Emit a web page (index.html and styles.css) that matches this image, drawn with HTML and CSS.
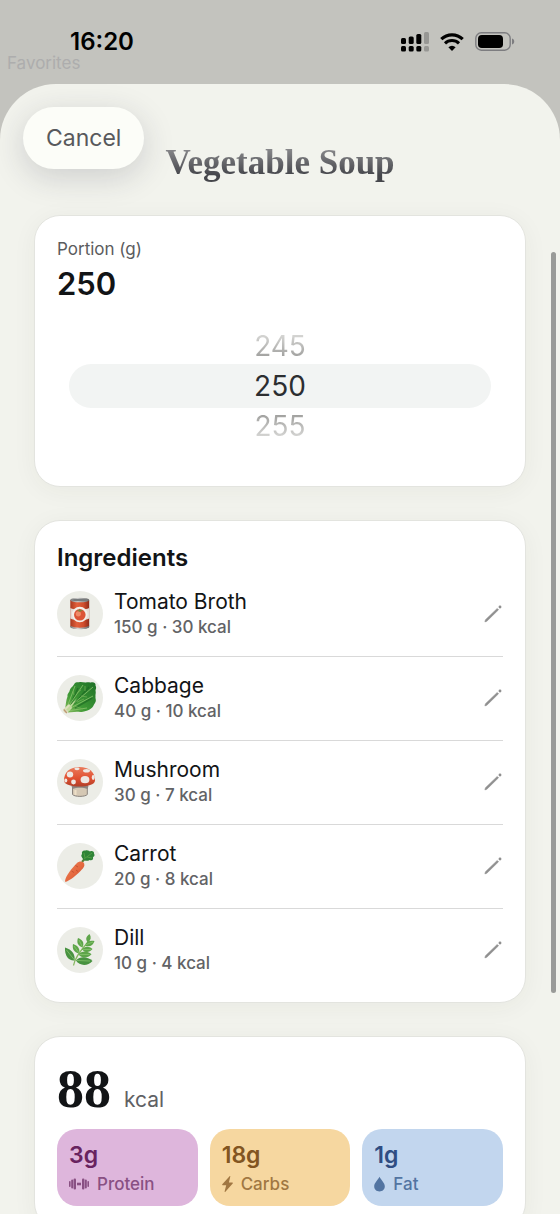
FILE: index.html
```
<!DOCTYPE html>
<html lang="en">
<head>
<meta charset="utf-8">
<meta name="viewport" content="width=device-width, initial-scale=1">
<title>Vegetable Soup</title>
<link rel="stylesheet" href="styles.css">
</head>
<body>
<svg class="defs" aria-hidden="true">
  <defs>
    <linearGradient id="can" x1="0" x2="1"><stop offset="0" stop-color="#a9381f"/><stop offset=".35" stop-color="#e2603c"/><stop offset=".7" stop-color="#d04c2c"/><stop offset="1" stop-color="#8f2c1a"/></linearGradient>
    <linearGradient id="metal" x1="0" x2="1"><stop offset="0" stop-color="#777"/><stop offset=".4" stop-color="#d8d8d8"/><stop offset="1" stop-color="#666"/></linearGradient>
    <linearGradient id="leaf" x1="0" y1="1" x2="1" y2="0"><stop offset="0" stop-color="#8cbc62"/><stop offset=".35" stop-color="#3f9a36"/><stop offset="1" stop-color="#1d6f26"/></linearGradient>
    <linearGradient id="cap" x1="0" y1="0" x2="0" y2="1"><stop offset="0" stop-color="#ea7b5c"/><stop offset=".6" stop-color="#e04f30"/><stop offset="1" stop-color="#b04029"/></linearGradient>
    <linearGradient id="root" x1="0" y1="0" x2="1" y2="1"><stop offset="0" stop-color="#ee8258"/><stop offset=".55" stop-color="#e4683f"/><stop offset="1" stop-color="#b9452e"/></linearGradient>
    <symbol id="pencil" viewBox="0 0 18 18"><path d="M2.200 14.200 12.800 4l1.200 1.200L3.500 15.500l-1.800.6z" fill="currentColor" stroke="currentColor" stroke-width=".5" stroke-linejoin="round"/><circle cx="15.300" cy="2.700" r="1.300" fill="currentColor"/></symbol>
  </defs>
</svg>
<div class="screen">
  <header class="status">
    <span class="back-label">Favorites</span>
    <time class="clock">16:20</time>
    <div class="indicators">
      <svg width="28" height="20" viewBox="0 0 28 20" aria-hidden="true">
        <rect x="0" y="6" width="5" height="6" rx="1.500"/><rect x="7.700" y="4.500" width="5" height="7.500" rx="1.500"/><rect x="15.300" y="2" width="5" height="10" rx="1.500"/>
        <rect x="0" y="14" width="5" height="5.500" rx="1.500"/><rect x="7.700" y="14" width="5" height="5.500" rx="1.500"/><rect x="15.300" y="14" width="5" height="5.500" rx="1.500"/>
        <g fill="#979794"><rect x="23" y="0" width="5" height="12" rx="1.500"/><rect x="23" y="14" width="5" height="5.500" rx="1.500"/></g>
      </svg>
      <svg width="24" height="18" viewBox="0 0 24 18" fill="none" stroke="#000" stroke-width="3.200" aria-hidden="true">
        <path d="M1.300 6.200a15.500 15.500 0 0 1 21.400 0"/><path d="M5 10.400a10 10 0 0 1 14 0" stroke-width="3"/><path d="M12 18 8.400 14.200a5 5 0 0 1 7.200 0z" fill="#000" stroke="none"/>
      </svg>
      <svg width="40" height="20" viewBox="0 0 40 20" aria-hidden="true">
        <rect x=".8" y=".8" width="34.400" height="17.400" rx="5.500" fill="none" stroke="#7d7d80" stroke-width="1.400"/><rect x="3" y="3" width="25" height="13" rx="3.800"/><path d="M37 6.500c1.700.6 2.200 1.800 2.200 3s-.5 2.400-2.200 3z" fill="#7d7d80"/>
      </svg>
    </div>
  </header>

  <main class="sheet">
    <div class="topbar">
      <button class="cancel" type="button">Cancel</button>
      <h1 class="title">Vegetable Soup</h1>
    </div>

    <div class="cards">
      <section class="card portion">
        <p class="portion-label" id="portion-label">Portion (g)</p>
        <p class="portion-value">250</p>
        <div class="picker" role="radiogroup" aria-labelledby="portion-label">
          <label class="choice above"><input type="radio" name="portion" value="245"><span>245</span></label>
          <label class="choice current"><input type="radio" name="portion" value="250" checked><span>250</span></label>
          <label class="choice below"><input type="radio" name="portion" value="255"><span>255</span></label>
        </div>
      </section>

      <section class="card">
        <h2 class="heading">Ingredients</h2>
        <ul class="list">
          <li class="item">
            <span class="avatar"><svg viewBox="0 0 46 46" aria-hidden="true">
              <path d="M13.300 9v26c0 4 18.900 4 18.900 0V9z" fill="url(#can)"/>
              <path d="M13.300 17c4 2 15 2 18.900 0v10.500c-4 2-15 2-18.900 0z" fill="#e4dcd5"/>
              <circle cx="22.800" cy="23.500" r="7.800" fill="#f3eee9"/><circle cx="22.800" cy="23.800" r="5.800" fill="#dc5336"/><circle cx="21.300" cy="22.800" r="2.600" fill="#ef8a68"/>
              <path d="m22.800 20.800-3.200-1.300 2.600-.2.500-1.700.8 1.700 2.800.1z" fill="#6f8a3c"/>
              <path d="M13.300 34.800c4 2.500 15 2.500 18.900 0v1.100c0 3-18.900 3-18.900 0z" fill="url(#metal)"/>
              <ellipse cx="22.750" cy="9" rx="9.500" ry="2.300" fill="url(#metal)"/><ellipse cx="22.750" cy="9" rx="7.800" ry="1.300" fill="#777b7d"/>
            </svg></span>
            <div class="info"><span class="name">Tomato Broth</span><span class="detail">150 g · 30 kcal</span></div>
            <button class="edit" type="button" aria-label="Edit Tomato Broth"><svg viewBox="0 0 18 18"><use href="#pencil"/></svg></button>
          </li>
          <li class="item">
            <span class="avatar"><svg viewBox="0 0 46 46" aria-hidden="true">
              <path d="M8 34C9 29 9 25 10.500 21.500 10 18.500 12 18 12.500 16c.5-3 3-4 4.500-6.500 1-2.500 3-2.300 5-2.300 2.500-.7 4.500.5 7 .3 2-.8 4 .3 5.500-.3 3-.3 4.500 1.300 4 3.300 1.300 2 .3 3.500 0 5 .7 2.500-.3 4 0 6-.3 2.500 1.300 4-.5 6.500-1.500 2-2 4.500-4 5.500-2.500 2-4.500 2.500-7 3-2.500 1-4.500-.3-7 .3L11 37.500z" fill="url(#leaf)"/>
              <path d="M14 29 21 13M17 29 32 12M18 33l17-10" fill="none" stroke="#176021" stroke-width="1.600" opacity=".55"/>
              <path d="m9 35 9-24M9 35 26 10M9 35 36 12M10 35l26-14M10 36l20-3" fill="none" stroke="#8cc56d" stroke-width=".8"/>
              <path d="m17 20-1-4M20 18l4-3M24 21l6 1M20 27l7-3M17 31l9 3M28 16V11" fill="none" stroke="#72b257" stroke-width=".7"/>
              <path d="m6.500 34 5.500-5 3 4-5 5c-2 1-4.500-2-3.500-4z" fill="#dde0bd"/><path d="m9 35 11-12-8 13z" fill="#c0d99c"/><path d="m6.800 34.500 3 3.500" stroke="#bd9774" stroke-width="1.200"/>
            </svg></span>
            <div class="info"><span class="name">Cabbage</span><span class="detail">40 g · 10 kcal</span></div>
            <button class="edit" type="button" aria-label="Edit Cabbage"><svg viewBox="0 0 18 18"><use href="#pencil"/></svg></button>
          </li>
          <li class="item">
            <span class="avatar"><svg viewBox="0 0 46 46" aria-hidden="true">
              <path d="M15.500 25.500h14.800v10c-2 2.500-12.800 2.500-14.800 0z" fill="#d5c8b4" stroke="#8a847e"/>
              <path d="M14.500 27h17l-1 3c-4-1.800-11-1.800-15 0z" fill="#8b8580"/><path d="M18.500 31v5" stroke="#eee0c8" stroke-width="2"/>
              <path d="M7 21.500C7 13 13 8 22.500 8S38 13 38 21.500c0 8-31 8-31 0z" fill="url(#cap)"/>
              <g fill="#eee8e3"><ellipse cx="13" cy="15.500" rx="3.200" ry="3"/><ellipse cx="28" cy="20.700" rx="4.400" ry="3.600"/><ellipse cx="29.500" cy="11.800" rx="3.500" ry="1.800"/><circle cx="16.500" cy="23" r="2.400"/><ellipse cx="20" cy="9.800" rx="2.600" ry="1.400"/><ellipse cx="36.200" cy="18.500" rx="1.500" ry="2.400"/><ellipse cx="8.800" cy="21.500" rx="1.500" ry="2"/></g>
            </svg></span>
            <div class="info"><span class="name">Mushroom</span><span class="detail">30 g · 7 kcal</span></div>
            <button class="edit" type="button" aria-label="Edit Mushroom"><svg viewBox="0 0 18 18"><use href="#pencil"/></svg></button>
          </li>
          <li class="item">
            <span class="avatar"><svg viewBox="0 0 46 46" aria-hidden="true">
              <path d="m25 19 5-6" stroke="#557f38" stroke-width="2"/>
              <path d="M26 16c-1.500-2-2.500-3.500-1-5-.6-2.500 1-4 3.500-3.500 2-1 4 .5 4.500 1 2-1 4.500 0 4 2 1 2 .5 3-1 3.500.6 2.500-1 4-3.500 3-2 1.500-5 1-6.500-1z" fill="#2f8437"/>
              <path d="m27 16 8-6M28 15l-1-5M30 14l5 1" stroke="#5aa548" stroke-width=".8" fill="none"/>
              <path d="M8 38c.5-5 7-13 12-18 2-2 5-2 6.500-.5 1.500 1.700 1 4-.7 6C20.500 31.500 13 37.500 8.500 39z" fill="url(#root)"/>
              <path d="m18.500 22.500 2.500 1.500M21 28.500l-2-1.500M14.500 28l2.500 1.500" stroke="#b7472c" stroke-width=".7"/>
            </svg></span>
            <div class="info"><span class="name">Carrot</span><span class="detail">20 g · 8 kcal</span></div>
            <button class="edit" type="button" aria-label="Edit Carrot"><svg viewBox="0 0 18 18"><use href="#pencil"/></svg></button>
          </li>
          <li class="item">
            <span class="avatar"><svg viewBox="0 0 46 46" aria-hidden="true">
              <path d="M16.500 38.500c1-6 5-13 15-24" fill="none" stroke="#87b862" stroke-width="1.300"/>
              <g fill="#5ea54a">
                <path d="M31 15.500c-3-3-2-6 1.500-8.500 2 3 1.500 6-1.500 8.500z"/><path d="M25.500 20.500c-5-2-6-5-4.500-9.500 5 2 6.500 5 4.500 9.500z"/><path d="M22 26.500c-5-1-7-4.500-6-9.500 5 1.500 7.500 5 6 9.500z"/>
                <path d="M17.500 33.500c-6 .5-10-5-9.500-13 7 2 10.500 7 9.500 13z" fill="#489240"/>
                <path d="M28 18.500c1-4 4.500-5.500 9.500-4.500-1.500 5-5.500 6.500-9.500 4.500z"/><path d="M25 22.500c2.500-3.500 7-3.500 10.500-.5-3 4-7.500 4-10.500.5z"/><path d="M21.500 27.500c3-3.800 9-3.800 13-.3-4 4.500-10 4-13 .3z"/>
                <path d="M19 33.500c4-4.500 11.500-4 16.500.5-5 5.500-13 5-16.500-.5z" fill="#489240"/>
              </g>
              <path d="M17.500 33 9.500 23M22 26 17 19M25.500 20l-3.500-7M28 18l8-3M26 22.500h8M22.500 27.500h10M20 33.500l13 .5" stroke="#8cc873" stroke-width=".7"/>
            </svg></span>
            <div class="info"><span class="name">Dill</span><span class="detail">10 g · 4 kcal</span></div>
            <button class="edit" type="button" aria-label="Edit Dill"><svg viewBox="0 0 18 18"><use href="#pencil"/></svg></button>
          </li>
        </ul>
      </section>

      <section class="card">
        <p class="energy"><strong>88</strong><span>kcal</span></p>
        <div class="macros">
          <div class="macro protein"><b>3g</b><span><svg width="20" height="14" viewBox="0 0 20 14" fill="currentColor" aria-hidden="true"><rect x="0" y="4" width="1.600" height="6" rx=".8"/><rect x="2.200" y="2.500" width="2" height="9" rx="1"/><rect x="4.600" y="1.500" width="2.400" height="11" rx="1"/><rect x="8" y="5.700" width="4" height="2.600"/><rect x="13" y="1.500" width="2.400" height="11" rx="1"/><rect x="15.800" y="2.500" width="2" height="9" rx="1"/><rect x="18.400" y="4" width="1.600" height="6" rx=".8"/></svg>Protein</span></div>
          <div class="macro carbs"><b>18g</b><span><svg width="11" height="16" viewBox="0 0 11 16" fill="currentColor" aria-hidden="true"><path d="M7.600.2.300 8.300c-.3.400-.2.900.4.900h3.500L2.600 15.400c-.1.500.4.700.8.300L10.700 7.500c.4-.4.200-.9-.4-.9H6.900L8.300.600c.1-.5-.3-.7-.7-.4z"/></svg>Carbs</span></div>
          <div class="macro fat"><b>1g</b><span><svg width="11" height="16" viewBox="0 0 11 16" fill="currentColor" aria-hidden="true"><path d="M5.500.8C7 4 10.800 7 10.800 10.300c0 3.200-2.300 5.200-5.300 5.200S.2 13.500.2 10.300C.2 7 4 4 5.500.8z"/></svg>Fat</span></div>
        </div>
      </section>
    </div>
    <div class="scroll-thumb"></div>
  </main>
</div>
</body>
</html>
```
FILE: styles.css
```
* { box-sizing: border-box; }
body { margin: 0; font-family: Inter, "Liberation Sans", sans-serif; color: #121416; background: #c3c3be; }
h1, h2, p, ul { margin: 0; padding: 0; font-weight: inherit; }
button { border: 0; padding: 0; background: none; font: inherit; color: inherit; cursor: pointer; }
svg { display: block; flex: none; }
.defs { position: absolute; width: 0; height: 0; }

.screen { height: 100vh; display: flex; flex-direction: column; overflow: hidden; background: linear-gradient(100deg, #c3c3be 85%, #c4bdb1 97%); }
.status { position: relative; flex: none; height: 84px; padding: 0 45px 0 70px; display: flex; align-items: center; justify-content: space-between; background: #c3c3be; }
.clock { font-size: 24px; line-height: 28px; font-weight: 600; color: #000; }
.back-label { position: absolute; left: 7px; top: 52px; font-size: 17px; line-height: 22px; color: #adadad; }
.indicators { display: flex; align-items: center; gap: 11px; }

.sheet { position: relative; flex: 1; min-height: 0; overflow: hidden; border-radius: 56px 56px 0 0; background: #f2f3ed; }
.topbar { display: grid; grid-template-columns: 1fr auto 1fr; align-items: start; padding: 23px 23px 32px; }
.cancel { justify-self: start; height: 62px; padding: 0 23px; border-radius: 31px; background: #fcfdf8; color: #58595c; font-size: 23px; box-shadow: 0 8px 32px rgba(40, 40, 60, .18); }
.title { padding-top: 36px; font: bold 35px/40px "Liberation Serif", serif; background: linear-gradient(#88888b 55%, #45464b 90%); -webkit-background-clip: text; background-clip: text; color: transparent; }

.cards { display: flex; flex-direction: column; gap: 33px; padding: 0 34px 34px; }
.card { padding: 22px; border: 1px solid #e3e4df; border-radius: 26px; background: #fff; box-shadow: 0 4px 24px rgba(60, 65, 40, .05); }

.portion-label { font-size: 17px; line-height: 22px; color: #5b5c5e; }
.portion-value { margin-top: 6px; font-size: 31px; line-height: 36px; font-weight: 600; }
.picker { margin: 26px 12px 20px; }
.choice { display: flex; align-items: center; justify-content: center; height: 36px; font-size: 28px; cursor: pointer; }
.choice input { position: absolute; opacity: 0; }
.choice span { color: transparent; -webkit-background-clip: text; background-clip: text; }
.above span { background-image: linear-gradient(#d4d4d2 20%, #9f9f9d 85%); }
.below span { background-image: linear-gradient(#9f9f9d 15%, #d4d4d2 80%); }
.current { height: 44px; border-radius: 22px; background: #f2f4f3; }
.current span { color: #2c2e31; }

.heading { font-size: 24px; line-height: 30px; font-weight: 600; }
.list { list-style: none; }
.item { display: flex; align-items: center; gap: 11px; padding: 16px 0 17px; border-bottom: 1px solid #d9d9d9; }
.item:last-child { border-bottom: 0; padding-bottom: 5px; }
.avatar { flex: none; width: 46px; height: 46px; border-radius: 50%; background: #ecede7; }
.info { flex: 1; min-width: 0; display: flex; flex-direction: column; }
.name { font-size: 21px; line-height: 26px; }
.detail { font-size: 17px; line-height: 24px; font-weight: 500; color: #626366; }
.edit { width: 20px; height: 20px; color: #8f8f8f; }

.energy { display: flex; align-items: baseline; gap: 13px; }
.energy strong { font: bold 54px/60px "Liberation Serif", serif; }
.energy span { font-size: 21px; color: #606164; }
.macros { display: grid; grid-template-columns: repeat(3, 1fr); gap: 12px; margin-top: 10px; }
.macro { display: flex; flex-direction: column; gap: 4px; padding: 12px 12px 11px; border-radius: 20px; }
.macro b { font-size: 23px; line-height: 28px; font-weight: 600; }
.macro span { display: flex; align-items: center; gap: 8px; font-size: 17px; line-height: 22px; font-weight: 500; }
.protein { background: #deb6dc; color: #68235f; }
.protein span { color: #895083; }
.carbs { background: #f6d7a0; color: #825521; }
.carbs span { color: #a17742; }
.fat { background: #c2d6ee; color: #2f4d82; }
.fat span { color: #5274a1; }

.scroll-thumb { position: absolute; right: 4px; top: 168px; width: 5px; height: 741px; border-radius: 3px; background: #999a98; }
```
